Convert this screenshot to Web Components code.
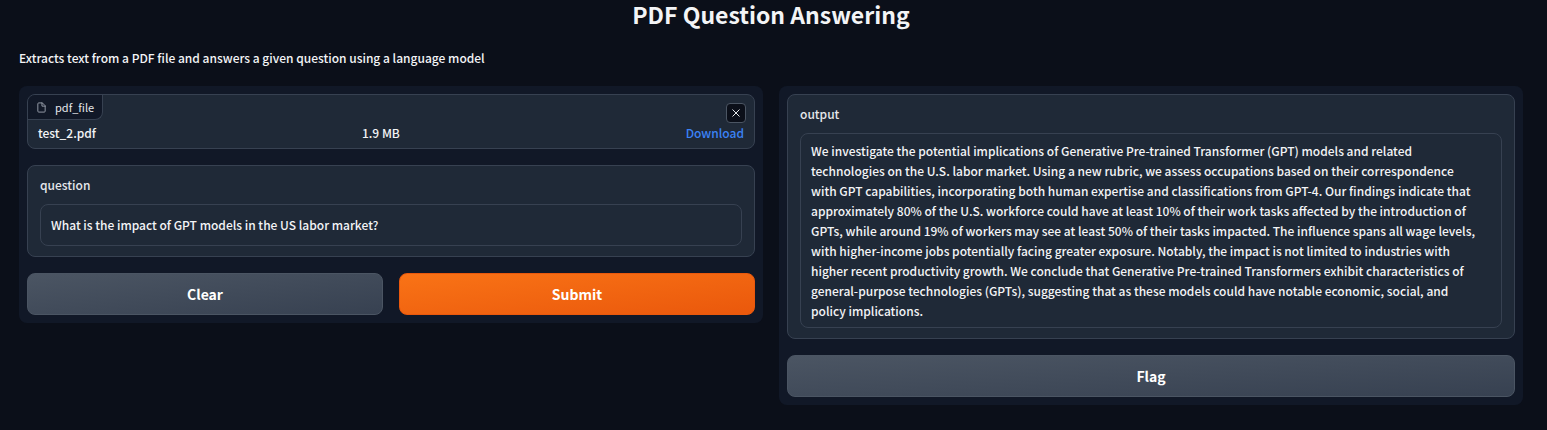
<!DOCTYPE html>
<html lang="en">
<head>
<meta charset="utf-8">
<title>PDF Question Answering</title>
<style>
  body {
    margin: 0;
    background: #0b0f19;
    color: #f3f4f6;
    font: 500 12px/20px "Noto Sans CJK SC", "Noto Sans", sans-serif;
  }
</style>
</head>
<body>
<qa-app></qa-app>

<script>
const define = (name, html, setup) => {
  const template = document.createElement('template');
  template.innerHTML = '<style>*{box-sizing:border-box}</style>' + html;
  customElements.define(name, class extends HTMLElement {
    constructor() {
      super();
      this.attachShadow({ mode: 'open' }).append(template.content.cloneNode(true));
    }
    connectedCallback() {
      if (setup) setup(this, this.shadowRoot);
    }
  });
};

define('qa-panel', `
  <style>
    :host { display: flex; flex-direction: column; gap: 16px; flex: 1 1 0; min-width: 0;
      box-sizing: border-box; padding: 8px; border-radius: 8px; background: #111827; }
  </style>
  <slot></slot>`);

define('qa-button', `
  <style>
    :host { display: block; flex: 1 1 0; }
    button { display: block; width: 100%; height: 42px; padding: 0; border: 1px solid #4b5563;
      border-radius: 8px; background: linear-gradient(to bottom right, #4b5563, #374151);
      color: #fff; font: inherit; font-size: 14px; font-weight: 700; cursor: pointer; }
    :host([primary]) button { border-color: #ea580c;
      background: linear-gradient(to bottom right, #f97316, #ea580c); }
  </style>
  <button type="button"><slot></slot></button>`);

define('qa-textbox', `
  <style>
    :host { display: block; box-sizing: border-box; padding: 10px 12px; border: 1px solid #374151;
      border-radius: 8px; background: #1f2937; }
    label { display: block; margin-bottom: 10px; line-height: 18px; color: #e5e7eb; }
    textarea { display: block; width: 100%; margin: 0; padding: 10px; border: 1px solid #374151;
      border-radius: 8px; background: #1f2937; color: #f3f4f6; font: inherit;
      resize: none; overflow: hidden; outline: none; }
    :host([readonly]) textarea { padding: 7px 22px 6px 10px; }
  </style>
  <label for="box"></label>
  <textarea id="box"></textarea>`,
  (host, root) => {
    const box = root.querySelector('textarea');
    root.querySelector('label').textContent = host.getAttribute('label');
    box.rows = Number(host.getAttribute('rows') || 1);
    box.readOnly = host.hasAttribute('readonly');
    box.value = host.getAttribute('value');
  });

define('qa-file', `
  <style>
    :host { display: block; position: relative; box-sizing: border-box; overflow: hidden;
      border: 1px solid #374151; border-radius: 8px; background: #1f2937; }
    .label { display: flex; align-items: center; gap: 8px; width: max-content; height: 25px;
      padding: 0 8px; border: solid #374151; border-width: 0 1px 1px 0;
      border-radius: 0 0 8px 0; background: #111827; font-size: 11px; font-weight: 400;
      color: #e5e7eb; }
    .label svg { width: 11px; height: 11px; color: #9ca3af; }
    table { width: 100%; border-collapse: collapse; table-layout: fixed; }
    td { height: 28px; padding: 0; text-align: left; vertical-align: top; line-height: 26px; }
    td:first-child { width: 46%; padding-left: 10px; }
    td:last-child { padding-right: 10px; text-align: right; }
    a { color: #3b82f6; text-decoration: none; }
    button { position: absolute; top: 8px; right: 8px; display: grid; place-items: center;
      width: 20px; height: 20px; padding: 0; border: 1px solid #4b5563; border-radius: 4px;
      background: #0b0f19; color: #e5e7eb; cursor: pointer; }
    button svg { width: 8px; height: 8px; }
  </style>
  <div class="label">
    <svg viewBox="0 0 24 24" fill="none" stroke="currentColor" stroke-width="2" stroke-linecap="round" stroke-linejoin="round" aria-hidden="true"><path d="M13 2H6a2 2 0 0 0-2 2v16a2 2 0 0 0 2 2h12a2 2 0 0 0 2-2V9z"/><path d="M13 2v7h7"/></svg>
    <span><slot name="label"></slot></span>
  </div>
  <table><tbody><tr>
    <td><slot name="name"></slot></td>
    <td><slot name="size"></slot></td>
    <td><a href="#download">Download</a></td>
  </tr></tbody></table>
  <button type="button" aria-label="Remove file"><svg viewBox="0 0 8 8" stroke="currentColor" stroke-width="1" aria-hidden="true"><path d="M0.5 0.5l7 7M7.5 0.5l-7 7"/></svg></button>`);

define('qa-app', `
  <style>
    :host { display: block; padding: 0 24px 25px 19px; }
    h1 { margin: 0; font-size: 23px; line-height: 28px; font-weight: 700; text-align: center; }
    p { margin: 20px 0 18px; }
    main { display: flex; align-items: flex-start; gap: 16px; }
    .actions { display: flex; gap: 16px; }
  </style>
  <h1>PDF Question Answering</h1>
  <p>Extracts text from a PDF file and answers a given question using a language model</p>
  <main>
    <qa-panel>
      <qa-file>
        <span slot="label">pdf_file</span>
        <span slot="name">test_2.pdf</span>
        <span slot="size">1.9 MB</span>
      </qa-file>
      <qa-textbox label="question" value="What is the impact of GPT models in the US labor market?"></qa-textbox>
      <div class="actions">
        <qa-button>Clear</qa-button>
        <qa-button primary>Submit</qa-button>
      </div>
    </qa-panel>
    <qa-panel>
      <qa-textbox label="output" rows="9" readonly value="We investigate the potential implications of Generative Pre-trained Transformer (GPT) models and related technologies on the U.S. labor market. Using a new rubric, we assess occupations based on their correspondence with GPT capabilities, incorporating both human expertise and classifications from GPT-4. Our findings indicate that approximately 80% of the U.S. workforce could have at least 10% of their work tasks affected by the introduction of GPTs, while around 19% of workers may see at least 50% of their tasks impacted. The influence spans all wage levels, with higher-income jobs potentially facing greater exposure. Notably, the impact is not limited to industries with higher recent productivity growth. We conclude that Generative Pre-trained Transformers exhibit characteristics of general-purpose technologies (GPTs), suggesting that as these models could have notable economic, social, and policy implications."></qa-textbox>
      <qa-button>Flag</qa-button>
    </qa-panel>
  </main>`);
</script>
</body>
</html>
